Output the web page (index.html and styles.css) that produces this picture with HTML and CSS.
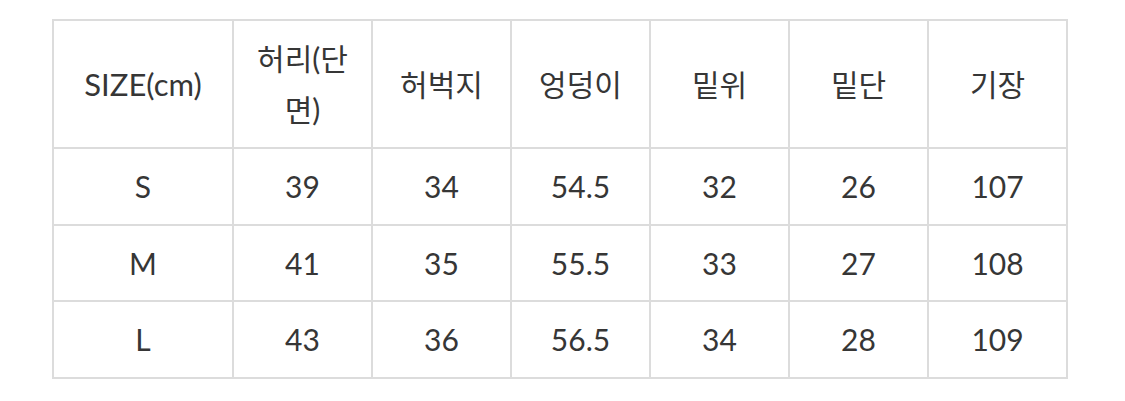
FILE: index.html
```html
<!DOCTYPE html>
<html lang="ko">
<head>
<meta charset="utf-8">
<link rel="stylesheet" href="styles.css">
</head>
<body>
<div class="wrap">
<table class="size-table">
  <colgroup>
    <col class="c-first">
    <col class="c">
    <col class="c">
    <col class="c">
    <col class="c">
    <col class="c">
    <col class="c">
  </colgroup>
  <thead>
    <tr class="head">
      <td class="label">SIZE(cm)</td>
      <td>허리(단면)</td>
      <td>허벅지</td>
      <td>엉덩이</td>
      <td>밑위</td>
      <td>밑단</td>
      <td>기장</td>
    </tr>
  </thead>
  <tbody>
    <tr><td>S</td><td>39</td><td>34</td><td>54.5</td><td>32</td><td>26</td><td>107</td></tr>
    <tr><td>M</td><td>41</td><td>35</td><td>55.5</td><td>33</td><td>27</td><td>108</td></tr>
    <tr><td>L</td><td>43</td><td>36</td><td>56.5</td><td>34</td><td>28</td><td>109</td></tr>
  </tbody>
</table>
</div>
</body>
</html>
```
FILE: styles.css
```css
html, body {
  margin: 0;
  padding: 0;
  background: #fff;
}
.wrap {
  padding: 19px 0 0 52px;
}
.size-table {
  border-collapse: collapse;
  table-layout: fixed;
  width: 1016px;
  font-family: Lato, "Noto Sans CJK KR", sans-serif;
  font-size: 30px;
  color: #363636;
}
.c-first { width: 180px; }
.c { width: 139px; }
.size-table td {
  border: 2px solid #dcdcdc;
  text-align: center;
  vertical-align: middle;
  line-height: 50.6px;
  padding: 12px 10px;
}
.head td {
  line-height: 51px;
  height: 100px;
}
.head .label {
  font-size: 31px;
}
```
